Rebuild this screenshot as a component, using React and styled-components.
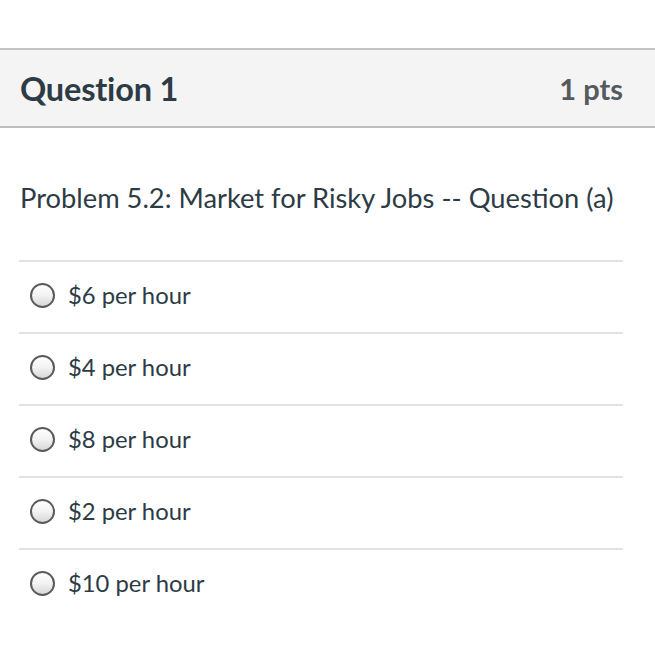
import React from 'react';
import styled, { createGlobalStyle } from 'styled-components';

const Global = createGlobalStyle`
  html, body {
    margin: 0;
    padding: 0;
    background: #ffffff;
  }
  body {
    font-family: Lato, "Open Sans", "Liberation Sans", sans-serif;
    color: #2d3b45;
  }
`;

const Page = styled.div`
  width: 655px;
  height: 652px;
  padding-top: 48px;
  box-sizing: border-box;
  overflow: hidden;
`;

const Header = styled.div`
  display: flex;
  justify-content: space-between;
  align-items: center;
  height: 76px;
  padding: 0 32px 0 20px;
  background: #f4f4f4;
  border-top: 2px solid #c4c4c4;
  border-bottom: 2px solid #bdbdbd;
`;

const Title = styled.h2`
  margin: 0;
  font-size: 32.5px;
  font-weight: 700;
  color: #2d3b45;
  letter-spacing: -0.2px;
`;

const Points = styled.span`
  font-size: 29px;
  font-weight: 700;
  color: #555a5e;
`;

const Body = styled.div`
  padding: 53px 32px 0 19px;
`;

const Prompt = styled.p`
  margin: 0 0 45px 1px;
  font-size: 27.3px;
  line-height: 34px;
  color: #2d3b45;
`;

const Answers = styled.div`
  display: flex;
  flex-direction: column;
`;

const Answer = styled.label`
  display: flex;
  align-items: center;
  gap: 13px;
  height: 66px;
  padding: 0 0 4px 11px;
  border-top: 2px solid #e2e2e2;
  font-size: 23.8px;
  color: #2d3b45;
`;

const Radio = styled.span`
  width: 21px;
  height: 21px;
  border-radius: 50%;
  border: 2px solid #5a5a5a;
  background: linear-gradient(180deg, #ffffff 0%, #f2f2f2 50%, #d8d8d8 100%);
  flex-shrink: 0;
`;

const options = ['$6 per hour', '$4 per hour', '$8 per hour', '$2 per hour', '$10 per hour'];

export default function App() {
  return (
    <Page>
      <Global />
      <Header>
        <Title>Question 1</Title>
        <Points>1 pts</Points>
      </Header>
      <Body>
        <Prompt>Problem 5.2: Market for Risky Jobs -- Question (a)</Prompt>
        <Answers>
          {options.map((o) => (
            <Answer key={o}>
              <Radio />
              {o}
            </Answer>
          ))}
        </Answers>
      </Body>
    </Page>
  );
}
